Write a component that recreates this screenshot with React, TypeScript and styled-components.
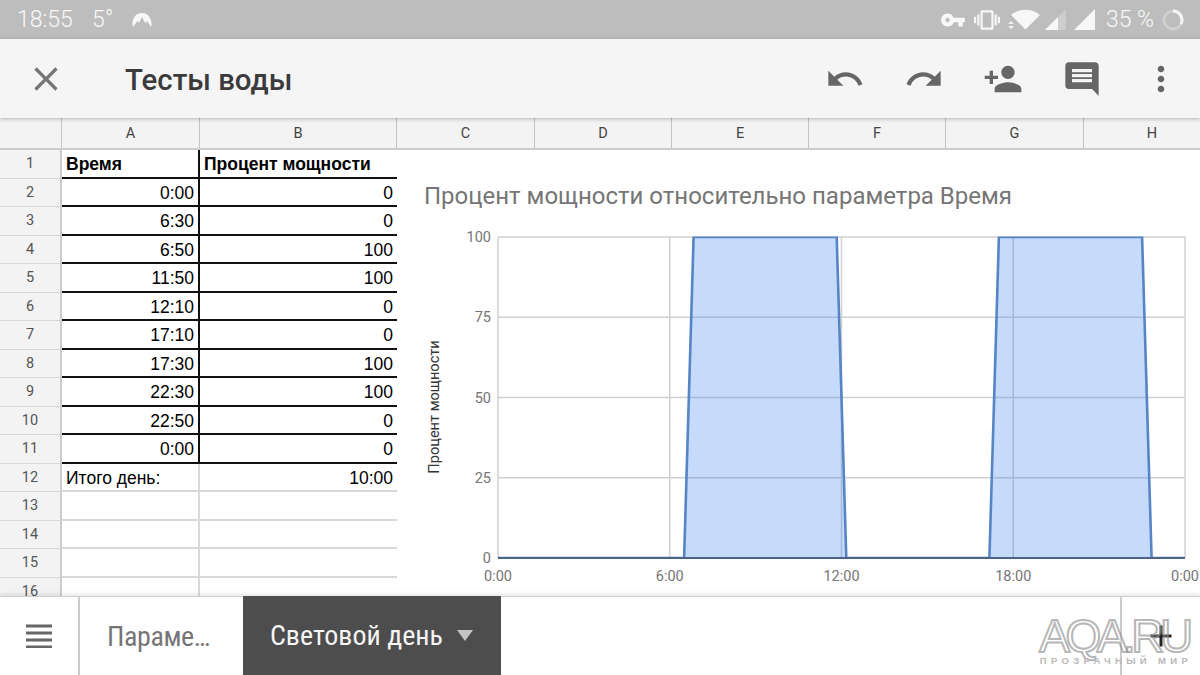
import React from "react";
import styled, { createGlobalStyle } from "styled-components";
import { MdClose, MdInsertComment, MdMoreVert, MdPersonAdd, MdRedo, MdUndo, MdVpnKey, MdVibration, MdAdd } from "react-icons/md";

const GlobalStyle = createGlobalStyle`
  html, body {
    margin: 0;
    padding: 0;
    background: #fff;
    font-family: Roboto, "Liberation Sans", sans-serif;
  }
`;

const Screen = styled.div`
  position: relative;
  width: 1200px;
  height: 675px;
  display: flex;
  flex-direction: column;
  overflow: hidden;
`;

const StatusBar = styled.div`
  height: 39px;
  flex: none;
  display: flex;
  align-items: center;
  padding: 0 16px 0 17px;
  background: #bdbdbd;
  color: #f8f8f8;
  font-size: 23px;
  font-weight: 300;
`;

const StatusLeft = styled.div`
  display: flex;
  align-items: center;
  gap: 19px;
  flex: 1;
`;

const StatusRight = styled.div`
  display: flex;
  align-items: center;
`;

const StatusGap = styled.span<{ $size: number }>`
  width: ${(p) => p.$size}px;
`;

const BatteryText = styled.span`
  margin: 0 8px 0 10px;
`;

const Toolbar = styled.div`
  position: relative;
  z-index: 2;
  height: 79px;
  flex: none;
  display: flex;
  align-items: center;
  background: #f5f5f5;
  box-shadow: 0 1px 4px rgba(0, 0, 0, 0.25);
`;

const CloseSlot = styled.div`
  width: 92px;
  display: flex;
  justify-content: center;
  color: #757575;
`;

const Title = styled.div`
  flex: 1;
  padding: 2px 0 0 33px;
  font-size: 29.4px;
  font-weight: 500;
  color: #3b3b3b;
`;

const ActionSlot = styled.div`
  width: 78.8px;
  display: flex;
  justify-content: center;
  color: #666;
`;

const Sheet = styled.div`
  position: relative;
  flex: 1;
  overflow: hidden;
  background: #fff;
`;

const ColumnHeader = styled.div`
  height: 32px;
  box-sizing: border-box;
  display: flex;
  background: #f3f3f3;
  border-bottom: 2px solid #ccc;
`;

const ColumnLabel = styled.div<{ $width: number }>`
  width: ${(p) => p.$width}px;
  flex: none;
  box-sizing: border-box;
  display: flex;
  align-items: center;
  justify-content: center;
  border-right: 1px solid #c4c4c4;
  font-size: 14.5px;
  color: #444;
`;

const Row = styled.div`
  height: 28.5px;
  display: flex;
`;

const RowNumber = styled.div`
  width: 62px;
  flex: none;
  box-sizing: border-box;
  display: flex;
  align-items: center;
  justify-content: center;
  background: #f3f3f3;
  border-right: 2px solid #ccc;
  border-bottom: 1px solid #d6d6d6;
  font-size: 14.5px;
  color: #555;
`;

const Cell = styled.div<{ $width: number; $right?: boolean; $bold?: boolean; $boxed?: boolean }>`
  width: ${(p) => p.$width}px;
  flex: none;
  box-sizing: border-box;
  display: flex;
  align-items: center;
  justify-content: ${(p) => (p.$right ? "flex-end" : "flex-start")};
  padding: 3px 4px 0 4px;
  font-family: "Liberation Sans", Arial, sans-serif;
  font-size: 17.5px;
  font-weight: ${(p) => (p.$bold ? 700 : 400)};
  color: #000;
  border-bottom: ${(p) => (p.$boxed ? "2px solid #111" : "2px solid #d9d9d9")};
`;

const ACell = styled(Cell)<{ $boxed?: boolean }>`
  border-right: ${(p) => (p.$boxed ? "2px solid #111" : "2px solid #d9d9d9")};
`;

const ChartPanel = styled.div`
  position: absolute;
  left: 398px;
  top: 33px;
  right: 0;
  bottom: 0;
  background: #fff;
`;

const ChartTitle = styled.div`
  height: 64px;
  box-sizing: border-box;
  padding: 32px 0 0 26px;
  font-size: 24px;
  line-height: 26px;
  color: #757575;
  white-space: nowrap;
`;

const AxisText = styled.text`
  font-family: Roboto, sans-serif;
  font-size: 14.5px;
  fill: #757575;
`;

const AxisTitle = styled.text`
  font-family: Roboto, sans-serif;
  font-size: 14.6px;
  fill: #333;
`;

const TabBar = styled.div`
  position: relative;
  z-index: 2;
  height: 78px;
  flex: none;
  display: flex;
  background: #fff;
  border-top: 1px solid #cfcfcf;
  box-shadow: 0 -2px 4px rgba(0, 0, 0, 0.1);
`;

const MenuSlot = styled.div`
  width: 80px;
  box-sizing: border-box;
  flex: none;
  display: flex;
  align-items: center;
  justify-content: center;
  padding-right: 1px;
  border-right: 2px solid #ccc;
`;

const Tab = styled.div<{ $active?: boolean }>`
  flex: none;
  width: ${(p) => (p.$active ? 258 : 163)}px;
  margin-top: ${(p) => (p.$active ? -1 : 0)}px;
  box-sizing: border-box;
  display: flex;
  align-items: center;
  gap: 14px;
  padding-left: 27px;
  background: ${(p) => (p.$active ? "#4d4d4d" : "#fff")};
  color: ${(p) => (p.$active ? "#f5f5f5" : "#757575")};
  font-size: 28px;
  font-stretch: 85%;
  letter-spacing: ${(p) => (p.$active ? 0 : -0.4)}px;
  white-space: nowrap;
`;

const Caret = styled.span`
  width: 0;
  height: 0;
  border-left: 8px solid transparent;
  border-right: 8px solid transparent;
  border-top: 11px solid #c4c4c4;
`;

const TabSpacer = styled.div`
  flex: 1;
`;

const AddSlot = styled.div`
  width: 80px;
  flex: none;
  box-sizing: border-box;
  display: flex;
  align-items: center;
  justify-content: center;
  border-left: 2px solid #ccc;
  color: #222;
`;

const Watermark = styled.div`
  position: absolute;
  z-index: 3;
  left: 1030px;
  top: 616px;
  width: 168px;
  display: flex;
  flex-direction: column;
  align-items: center;
  pointer-events: none;
`;

const WatermarkLogo = styled.div`
  font-family: "Liberation Sans", sans-serif;
  font-size: 46px;
  line-height: 40px;
  letter-spacing: -4.5px;
  color: rgba(255, 255, 255, 0.2);
  -webkit-text-stroke: 2px rgba(140, 140, 140, 0.65);
`;

const WatermarkSub = styled.div`
  padding-left: 4px;
  font-family: "Liberation Sans", sans-serif;
  font-size: 9.5px;
  line-height: 10px;
  font-weight: 700;
  letter-spacing: 4.35px;
  white-space: nowrap;
  color: #b8b8b8;
`;

const VpnLogo = () => (
  <svg width="20" height="16" viewBox="0 0 20 16">
    <path d="M1 15C-1 8 3 1 10 1s11 7 9 14l-4-6-1.500 2.500L10 5l-3 6-1.500-2z" fill="#f7f7f7" />
  </svg>
);

const WifiIcon = () => (
  <svg width="33" height="22" viewBox="0 0 33 22">
    <path d="M3 6C11-1 24-1 32 6L17.500 20.500z" fill="#f7f7f7" />
    <path d="M0 15l3-3 3 3zM0 17l3 3 3-3z" fill="#f2f2f2" />
  </svg>
);

const SignalIcon = ({ weak }: { weak?: boolean }) => (
  <svg width="22" height="22" viewBox="0 0 22 22">
    <path d="M0 21L21 0v21z" fill={weak ? "#cdcdcd" : "#f7f7f7"} />
    {weak && <path d="M0 21l13-13v13z" fill="#f7f7f7" />}
  </svg>
);

const BatteryRing = () => (
  <svg width="22" height="22" viewBox="0 0 22 22">
    <circle cx="11" cy="11" r="9" fill="none" stroke="#cfcfcf" strokeWidth="3" />
    <path d="M11 2a9 9 0 0 1 8 13" fill="none" stroke="#f5f5f5" strokeWidth="3" />
  </svg>
);

const MenuIcon = () => (
  <svg width="28" height="24" viewBox="0 0 28 24">
    <path d="M1 2h26M1 9h26M1 16h26M1 23h26" stroke="#666" strokeWidth="3" />
  </svg>
);

const columns = [
  { name: "", width: 62 },
  { name: "A", width: 138 },
  { name: "B", width: 197 },
  { name: "C", width: 138 },
  { name: "D", width: 137 },
  { name: "E", width: 137 },
  { name: "F", width: 137 },
  { name: "G", width: 138 },
  { name: "H", width: 137 },
];

const rows = [
  { a: "Время", b: "Процент мощности", head: true },
  { a: "0:00", b: "0" },
  { a: "6:30", b: "0" },
  { a: "6:50", b: "100" },
  { a: "11:50", b: "100" },
  { a: "12:10", b: "0" },
  { a: "17:10", b: "0" },
  { a: "17:30", b: "100" },
  { a: "22:30", b: "100" },
  { a: "22:50", b: "0" },
  { a: "0:00", b: "0" },
];

const PLOT = { left: 498, right: 1185, top: 237, bottom: 558 };
const xOf = (minutes: number) => PLOT.left + (minutes / 1440) * (PLOT.right - PLOT.left);
const yOf = (value: number) => PLOT.bottom - (value / 100) * (PLOT.bottom - PLOT.top);

const series: [number, number][] = [
  [0, 0],
  [390, 0],
  [410, 100],
  [710, 100],
  [730, 0],
  [1030, 0],
  [1050, 100],
  [1350, 100],
  [1370, 0],
  [1440, 0],
];

const Chart = () => {
  const line = series.map(([m, v]) => `${xOf(m).toFixed(1)},${yOf(v).toFixed(1)}`).join(" ");
  return (
    <svg width="802" height="382" viewBox="398 215 802 382" style={{ display: "block" }}>
      <clipPath id="plot-area">
        <rect x={PLOT.left} y={PLOT.top - 0.5} width={PLOT.right - PLOT.left} height={PLOT.bottom - PLOT.top + 1} />
      </clipPath>
      {[0, 25, 50, 75, 100].map((v) => (
        <g key={v}>
          <line x1={PLOT.left} x2={PLOT.right} y1={yOf(v)} y2={yOf(v)} stroke="#d0d0d0" strokeWidth="1.5" />
          <AxisText x={491} y={yOf(v) + 5} textAnchor="end">
            {v}
          </AxisText>
        </g>
      ))}
      {[
        [0, "0:00"],
        [360, "6:00"],
        [720, "12:00"],
        [1080, "18:00"],
        [1440, "0:00"],
      ].map(([m, label]) => (
        <g key={m}>
          <line x1={xOf(m as number)} x2={xOf(m as number)} y1={PLOT.top} y2={PLOT.bottom} stroke="#d0d0d0" strokeWidth="1.5" />
          <AxisText x={xOf(m as number)} y={581} textAnchor="middle">
            {label}
          </AxisText>
        </g>
      ))}
      <polygon points={line} fill="#4285f4" fillOpacity="0.3" />
      <polyline points={line} fill="none" stroke="#5585c4" strokeWidth="2.6" clipPath="url(#plot-area)" />
      <line x1={PLOT.left} x2={PLOT.right} y1={PLOT.bottom} y2={PLOT.bottom} stroke="#4d6486" strokeWidth="2" />
      <AxisTitle x={0} y={0} textAnchor="middle" transform="translate(439 407) rotate(-90)">
        Процент мощности
      </AxisTitle>
    </svg>
  );
};

export default function App() {
  return (
    <Screen>
      <GlobalStyle />
      <StatusBar>
        <StatusLeft>
          <span>18:55</span>
          <span>5°</span>
          <VpnLogo />
        </StatusLeft>
        <StatusRight>
          <MdVpnKey size={26} color="#f7f7f7" style={{ marginRight: 8 }} />
          <MdVibration size={26} color="#f7f7f7" style={{ marginRight: 8 }} />
          <WifiIcon />
          <StatusGap $size={4} />
          <SignalIcon weak />
          <StatusGap $size={7} />
          <SignalIcon />
          <BatteryText>35 %</BatteryText>
          <BatteryRing />
        </StatusRight>
      </StatusBar>

      <Toolbar>
        <CloseSlot>
          <MdClose size={40} />
        </CloseSlot>
        <Title>Тесты воды</Title>
        <ActionSlot>
          <MdUndo size={40} />
        </ActionSlot>
        <ActionSlot>
          <MdRedo size={40} />
        </ActionSlot>
        <ActionSlot>
          <MdPersonAdd size={40} />
        </ActionSlot>
        <ActionSlot>
          <MdInsertComment size={40} />
        </ActionSlot>
        <ActionSlot>
          <MdMoreVert size={40} />
        </ActionSlot>
      </Toolbar>

      <Sheet>
        <ColumnHeader>
          {columns.map((c) => (
            <ColumnLabel key={c.name} $width={c.width}>
              {c.name}
            </ColumnLabel>
          ))}
        </ColumnHeader>
        {rows.map((r, i) => (
          <Row key={i}>
            <RowNumber>{i + 1}</RowNumber>
            <ACell $width={138} $right={!r.head} $bold={r.head} $boxed>
              {r.a}
            </ACell>
            <Cell $width={197} $right={!r.head} $bold={r.head} $boxed>
              {r.b}
            </Cell>
          </Row>
        ))}
        <Row>
          <RowNumber>12</RowNumber>
          <ACell $width={138}>Итого день:</ACell>
          <Cell $width={197} $right>
            10:00
          </Cell>
        </Row>
        {[13, 14, 15, 16].map((n) => (
          <Row key={n}>
            <RowNumber>{n}</RowNumber>
            <ACell $width={138} />
            <Cell $width={197} />
          </Row>
        ))}
        <ChartPanel>
          <ChartTitle>Процент мощности относительно параметра Время</ChartTitle>
          <Chart />
        </ChartPanel>
      </Sheet>

      <TabBar>
        <MenuSlot>
          <MenuIcon />
        </MenuSlot>
        <Tab>Параме…</Tab>
        <Tab $active>
          Световой день
          <Caret />
        </Tab>
        <TabSpacer />
        <AddSlot>
          <MdAdd size={36} />
        </AddSlot>
      </TabBar>

      <Watermark>
        <WatermarkLogo>AQA.RU</WatermarkLogo>
        <WatermarkSub>ПРОЗРАЧНЫЙ МИР</WatermarkSub>
      </Watermark>
    </Screen>
  );
}
